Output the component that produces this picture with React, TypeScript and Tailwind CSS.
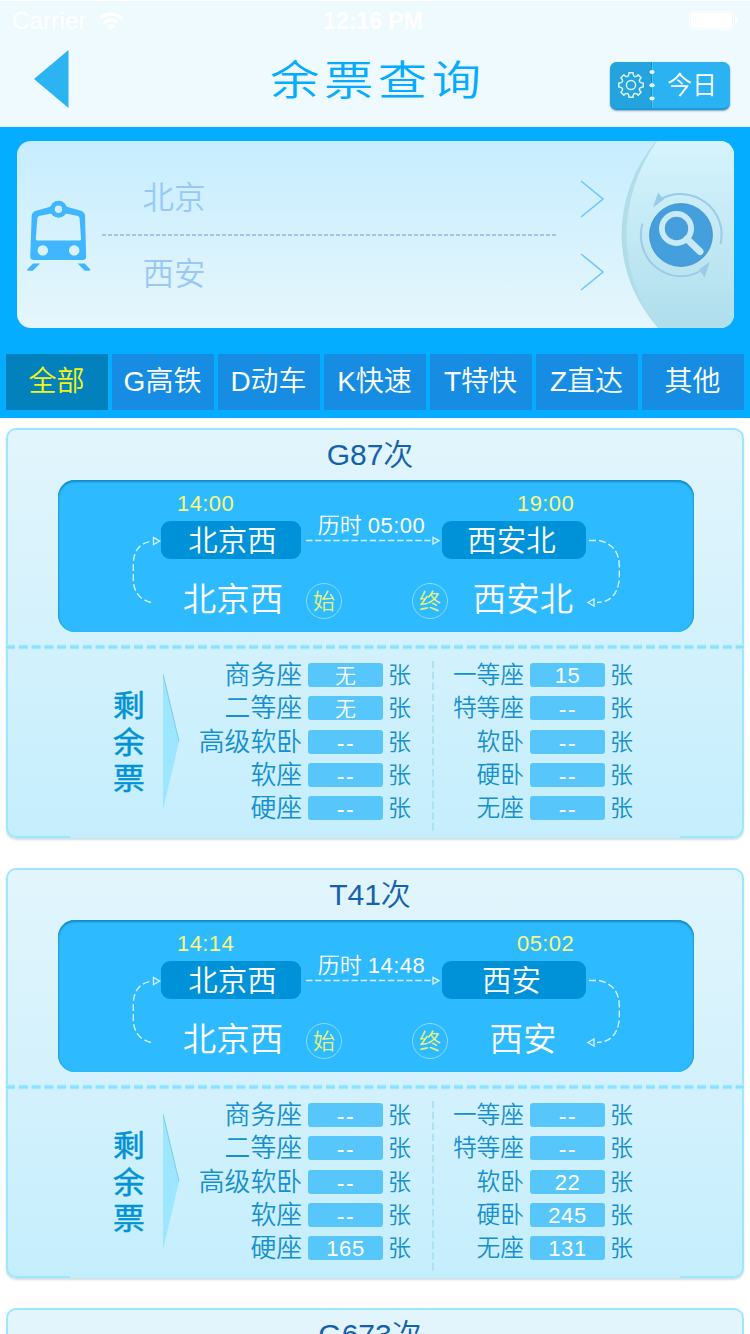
import React from 'react';

const FONT = "font-['Liberation_Sans','Noto_Sans_CJK_SC',sans-serif]";

type Seat = [name: string, count: string];

interface Train {
  code: string;
  depart: string;
  arrive: string;
  duration: string;
  from: string;
  to: string;
  left: Seat[];
  right: Seat[];
}

const trains: Train[] = [
  {
    code: 'G87次',
    depart: '14:00',
    arrive: '19:00',
    duration: '05:00',
    from: '北京西',
    to: '西安北',
    left: [['商务座', '无'], ['二等座', '无'], ['高级软卧', '--'], ['软座', '--'], ['硬座', '--']],
    right: [['一等座', '15'], ['特等座', '--'], ['软卧', '--'], ['硬卧', '--'], ['无座', '--']],
  },
  {
    code: 'T41次',
    depart: '14:14',
    arrive: '05:02',
    duration: '14:48',
    from: '北京西',
    to: '西安',
    left: [['商务座', '--'], ['二等座', '--'], ['高级软卧', '--'], ['软座', '--'], ['硬座', '165']],
    right: [['一等座', '--'], ['特等座', '--'], ['软卧', '22'], ['硬卧', '245'], ['无座', '131']],
  },
];

const tabs = ['全部', 'G高铁', 'D动车', 'K快速', 'T特快', 'Z直达', '其他'];

function StatusBar() {
  return (
    <div className="flex h-10 items-center border-t border-white px-3 text-white">
      <div className="flex w-[298px] items-center gap-3">
        <span className="text-[24px] leading-10 tracking-[0.2px]">Carrier</span>
        <svg width="24" height="18" viewBox="0 0 24 18" fill="none" stroke="#fff" strokeWidth="3.2">
          <path d="M1.2 6.6a15.3 15.3 0 0 1 21.6 0" />
          <path d="M5.3 10.8a9.5 9.5 0 0 1 13.4 0" />
          <path d="M12 18l-4.2-4.3a6 6 0 0 1 8.4 0z" fill="#fff" stroke="none" />
        </svg>
      </div>
      <span className="w-[126px] text-center text-[23px] font-bold leading-10">12:16 PM</span>
      <svg className="ml-auto" width="49" height="19" viewBox="0 0 49 19">
        <rect x="0.5" y="0.5" width="44" height="18" rx="3" fill="none" stroke="#fff" />
        <rect x="2" y="2" width="41" height="15" rx="2" fill="#fff" />
        <path d="M46 6q3 1 3 3.5t-3 3.5z" fill="#fff" />
      </svg>
    </div>
  );
}

function gearPath() {
  const at = (a: number, r: number) => `${(14 + Math.cos(a) * r).toFixed(2)} ${(14 + Math.sin(a) * r).toFixed(2)}`;
  const step = Math.PI / 4;
  let d = '';
  for (let i = 0; i < 8; i++) {
    const a = i * step - Math.PI / 2;
    d += `${i === 0 ? 'M' : 'L'}${at(a - 0.17, 12.4)}L${at(a + 0.17, 12.4)}L${at(a + 0.21, 10.6)}Q${at(a + step / 2, 8)} ${at(a + step - 0.21, 10.6)}`;
  }
  return `${d}Z`;
}

function DateButton() {
  return (
    <div className="relative flex h-[48px] w-[120px] overflow-hidden rounded-[7px] border-b-2 border-[#1d9bd8] bg-[#2ab2f3] shadow-[0_1px_2px_rgba(0,60,90,0.45)]">
      <div className="flex w-[42px] items-center justify-center border-r border-[#1b92c9] bg-[#25a3de]">
        <svg width="28" height="28" viewBox="0 0 28 28" fill="none" stroke="#d9f3fd" strokeWidth="1.5" strokeLinejoin="round">
          <path d={gearPath()} />
          <circle cx="14" cy="14" r="4.6" />
        </svg>
      </div>
      <div className="flex-1 border-l border-[#4cc4f9] pl-[14px] text-[25px] font-[350] leading-[46px] text-white">今日</div>
      <svg className="absolute left-[39px] top-0" width="6" height="46" viewBox="0 0 6 46" fill="#e8f8ff">
        <ellipse cx="3" cy="10" rx="2.6" ry="2" />
        <ellipse cx="3" cy="23.3" rx="2.6" ry="2" />
        <ellipse cx="3" cy="36.6" rx="2.6" ry="2" />
      </svg>
    </div>
  );
}

function Header() {
  return (
    <header className="h-[127px] bg-[#effaff]">
      <StatusBar />
      <div className="flex h-[87px] items-start">
        <svg className="ml-[34px] mt-[10px]" width="35" height="58" viewBox="0 0 35 58">
          <path d="M0 29L34.5 0V58Z" fill="#2bb3f2" />
        </svg>
        <h1 className="ml-[201px] w-[214px] whitespace-nowrap text-[41px] font-[350] leading-[83px] text-[#04abff]">
          <span className="inline-block origin-left scale-x-[1.2] tracking-[3.9px]">余票查询</span>
        </h1>
        <div className="ml-[126px] mt-[22px]">
          <DateButton />
        </div>
      </div>
    </header>
  );
}

function TrainIcon() {
  return (
    <svg width="64" height="72" viewBox="27 200 64 72" fill="#40b6ff">
      <path
        fillRule="evenodd"
        d="M51 206.5L58.5 204L66 206.5L81 210.8Q84.8 212.2 85 215.5L86.2 256.5Q86.2 260 82.5 260H34Q30.2 260 30.2 256.5L31.7 215.5Q32 212.2 36 210.8ZM39 216Q37.5 216.5 37.4 218.5L35.8 238.5Q35.7 240.5 37.5 240.5H79.5Q81.2 240.5 81 238.5L79.6 218.5Q79.5 216.5 78 216L65.5 213.5H51.5ZM42.8 245.2a5.2 5.2 0 1 0 0.01 0ZM74.2 245.2a5.2 5.2 0 1 0 0.01 0Z"
      />
      <circle cx="58.5" cy="209.2" r="8.5" />
      <circle cx="58.5" cy="209.2" r="3.7" fill="#cfeffd" />
      <path d="M33 263.5H40L32.8 270.8H27.5Q26.5 270 27.8 268.8ZM77.5 263.5H84.5L89.8 268.8Q90.8 270.3 89.5 270.8H84.8Z" />
    </svg>
  );
}

function Chevron() {
  return (
    <svg width="24" height="38" viewBox="0 0 24 38" fill="none" stroke="#6fc5ff" strokeWidth="1.6">
      <path d="M1 1L23 19L1 37" />
    </svg>
  );
}

function SearchButton() {
  return (
    <svg width="114" height="187" viewBox="620 141 114 187">
      <defs>
        <linearGradient id="lens" x1="0" y1="0" x2="0" y2="1">
          <stop offset="0" stopColor="#d6f4fd" />
          <stop offset="1" stopColor="#afdeec" />
        </linearGradient>
      </defs>
      <path d="M656 141Q622 182 621.5 235Q622 286 658 328H734V141Z" fill="#b1dde9" />
      <path d="M657 141Q627 184 626.5 235Q627 286 658 328H734V141Z" fill="url(#lens)" />
      <g fill="none" stroke="#9acbe7" strokeWidth="2">
        <path d="M661 199A41 40.5 0 0 1 720.5 244" />
        <path d="M642.5 223.5A40 41 0 0 0 702 270" />
      </g>
      <path d="M653 207.5L658 192.5L664 199.5ZM710 261.5L704.5 277.5L699 269.5Z" fill="#9acbe7" />
      <circle cx="681" cy="235" r="31.5" fill="#459fdd" stroke="#388cc6" strokeWidth="0.7" />
      <circle cx="676.5" cy="228.5" r="14.6" fill="none" stroke="#c8eaf7" strokeWidth="5.8" />
      <path d="M687 239L700 251.5" stroke="#c8eaf7" strokeWidth="7" strokeLinecap="round" />
    </svg>
  );
}

function SearchCard() {
  return (
    <section className="mx-auto flex h-[187px] w-[717px] overflow-hidden rounded-[14px] bg-linear-to-b from-[#c6edff] to-[#e6f6fc]">
      <div className="ml-[10px] mt-[59px] w-[75px]">
        <TrainIcon />
      </div>
      <div className="w-[454px] text-[31.5px] font-[350] text-[#98c9f6]">
        <div className="h-[93px] pl-[41px] pt-[32px] leading-[50px]">北京</div>
        <svg className="block" width="454" height="2" viewBox="0 0 454 2">
          <path d="M0 1H454" stroke="#8cb9dd" strokeWidth="1.5" strokeDasharray="4 2" />
        </svg>
        <div className="pl-[41px] pt-[13px] leading-[50px]">西安</div>
      </div>
      <div className="flex flex-1 flex-col gap-[35px] pl-[24px] pt-[39px]">
        <Chevron />
        <Chevron />
      </div>
      <SearchButton />
    </section>
  );
}

function Tabs() {
  return (
    <nav className="grid grid-cols-7 gap-1 px-1.5">
      {tabs.map((t, i) => (
        <div
          key={t}
          className={`h-14 pr-px text-center text-[28px] font-[350] leading-[56px] ${i === 0 ? 'bg-[#0281bc] text-[#f6f514]' : 'bg-[#168de2] text-white'}`}
        >
          {t}
        </div>
      ))}
    </nav>
  );
}

function RouteLines() {
  return (
    <svg className="absolute left-0 top-0" width="636" height="152" viewBox="58 480 636 152" fill="none" stroke="#d2f1ff" strokeWidth="1.4">
      <g strokeDasharray="7 3">
        <path d="M151 602.5Q133.5 598 133.3 579V563Q134 544 152 541" />
        <path d="M589 540.5H599Q619.5 545 619.3 567V579Q617 602 597 602.5" />
      </g>
      <path d="M306 540.5H433" strokeDasharray="6.5 2.6" />
      <path d="M153.5 537.5V544.5L159.5 541ZM433 537.5V544L439 540.5ZM594 599V606L588 602.5Z" />
    </svg>
  );
}

function Badge({ children }: { children: string }) {
  return (
    <div className="size-9 rounded-full border-[1.5px] border-[#8bdaff] text-center text-[22px] font-[350] leading-[35px] text-[#e6f27c]">{children}</div>
  );
}

function RoutePanel({ train }: { train: Train }) {
  return (
    <div className="relative ml-[50px] h-[152px] w-[636px] rounded-[17px] bg-[#2dbafe] font-[350] text-white shadow-[inset_0_2px_2px_#168ac4,inset_1px_0_1px_#27a8e8,inset_-1px_0_1px_#27a8e8]">
      <RouteLines />
      <div className="flex h-[79px] pl-[103px]">
        <div className="w-[140px]">
          <div className="h-[41px] pl-[16px] text-[22px] leading-[47px] tracking-[0.4px] text-[#fbf880]">{train.depart}</div>
          <div className="h-[38px] rounded-[9px] bg-[#0092d9] pl-[3px] text-center text-[29.5px] leading-[39px]">{train.from}</div>
        </div>
        <div className="w-[141px] whitespace-nowrap pt-[30px] text-center text-[22px] leading-[31px]">
          历时 <span className="tracking-[0.5px]">{train.duration}</span>
        </div>
        <div className="w-[144px]">
          <div className="h-[41px] pl-[75px] text-[22px] leading-[47px] tracking-[0.4px] text-[#fbf880]">{train.arrive}</div>
          <div className="h-[38px] rounded-[9px] bg-[#0092d9] pr-[5px] text-center text-[29.5px] leading-[39px]">{train.to}</div>
        </div>
      </div>
      <div className="flex pl-[115px] text-[33.5px] leading-[81px]">
        <div className="w-[120px] text-center">{train.from}</div>
        <div className="ml-[13px] mt-[24px]"><Badge>始</Badge></div>
        <div className="ml-[70px] mt-[24px]"><Badge>终</Badge></div>
        <div className="ml-[15px] w-[120px] text-center">{train.to}</div>
      </div>
    </div>
  );
}

function countStyle(count: string) {
  if (count === '无') return 'text-[21px] leading-[26px]';
  if (count === '--') return 'pl-px text-[23px] leading-[26px] tracking-[1.6px]';
  return 'text-[22px] leading-[26px] tracking-[0.6px]';
}

function SeatRow({ seat, wide }: { seat: Seat; wide: boolean }) {
  return (
    <div className="flex h-[33.3px] items-start text-[#168fce]">
      <div className={wide ? 'w-[108px] whitespace-nowrap text-right text-[25.8px] leading-[25px]' : 'w-[81px] whitespace-nowrap text-right text-[23.7px] leading-[25px]'}>
        {seat[0]}
      </div>
      <div className={`ml-[6px] h-6 w-[75px] rounded-[3px] bg-[#57c6fa] text-center text-white ${countStyle(seat[1])}`}>{seat[1]}</div>
      <div className="ml-[5px] w-[24px] text-[23px] leading-[25px]">张</div>
    </div>
  );
}

function SeatColumn({ seats, wide }: { seats: Seat[]; wide: boolean }) {
  return (
    <div className="pt-[2px]">
      {seats.map((s) => (
        <SeatRow key={s[0]} seat={s} wide={wide} />
      ))}
    </div>
  );
}

function CardTitle({ children }: { children: string }) {
  return <h2 className="h-[50px] pr-[10px] text-center text-[30px] font-[350] leading-[49px] text-[#1561ab]">{children}</h2>;
}

function TrainCard({ train }: { train: Train }) {
  return (
    <article className="relative mx-[6px] mb-[30px] h-[410px] shrink-0 rounded-[10px] border-2 border-[#9ce6ff] bg-linear-to-b from-[#e2f5fc] to-[#c5eefd] shadow-[0_2px_2px_rgba(90,150,170,0.3)]">
      <CardTitle>{train.code}</CardTitle>
      <RoutePanel train={train} />
      <svg className="-mx-[2px] mt-[12px] block" width="738" height="6" viewBox="0 0 738 6">
        <path d="M0 3H738" stroke="#b5edff" strokeWidth="5" strokeDasharray="9 3.8" />
        <path d="M0 3H738" stroke="#8be2ff" strokeWidth="3" strokeDasharray="9 3.8" />
      </svg>
      <div className="flex font-[350]">
        <div className="ml-[105px] mt-[38px] w-[34px] text-[30px] font-normal leading-[36.5px] text-[#0093d8] [-webkit-text-stroke:0.5px_#0093d8]">
          {['剩', '余', '票'].map((c) => (
            <div key={c} className="origin-left scale-x-[1.06]">{c}</div>
          ))}
        </div>
        <svg className="ml-[16px] mt-[24px]" width="17" height="136" viewBox="0 0 17 136">
          <path d="M0 0L16 67.5L0 136Z" fill="#9de6ff" />
          <path d="M0 0L16 67.5" stroke="#80c9e5" strokeWidth="1" />
        </svg>
        <div className="ml-[14px] pt-[11px]">
          <SeatColumn seats={train.left} wide />
        </div>
        <svg className="ml-[19px] mt-[11px]" width="4" height="172" viewBox="0 0 4 172">
          <path d="M2 0V172" stroke="#9fdced" strokeWidth="1.4" strokeDasharray="7.5 3.3" />
        </svg>
        <div className="ml-[8px] pt-[11px]">
          <SeatColumn seats={train.right} wide={false} />
        </div>
      </div>
      <div className="absolute -bottom-[2px] left-[62px] h-[2px] w-[610px] bg-[#c5eefd]" />
    </article>
  );
}

function NextCard({ code }: { code: string }) {
  return (
    <article className="mx-[6px] h-[26px] overflow-hidden rounded-t-[10px] border-2 border-b-0 border-[#9ce6ff] bg-[#e2f5fc]">
      <CardTitle>{code}</CardTitle>
    </article>
  );
}

export default function App() {
  return (
    <main className={`flex h-[1334px] w-[750px] flex-col overflow-hidden bg-white ${FONT}`}>
      <Header />
      <div className="h-[291px] shrink-0 bg-[#04adff] pt-[14px]">
        <SearchCard />
        <div className="mt-[26px]">
          <Tabs />
        </div>
      </div>
      <div className="flex flex-col pt-[10px]">
        {trains.map((t) => (
          <TrainCard key={t.code} train={t} />
        ))}
        <NextCard code="G673次" />
      </div>
    </main>
  );
}
